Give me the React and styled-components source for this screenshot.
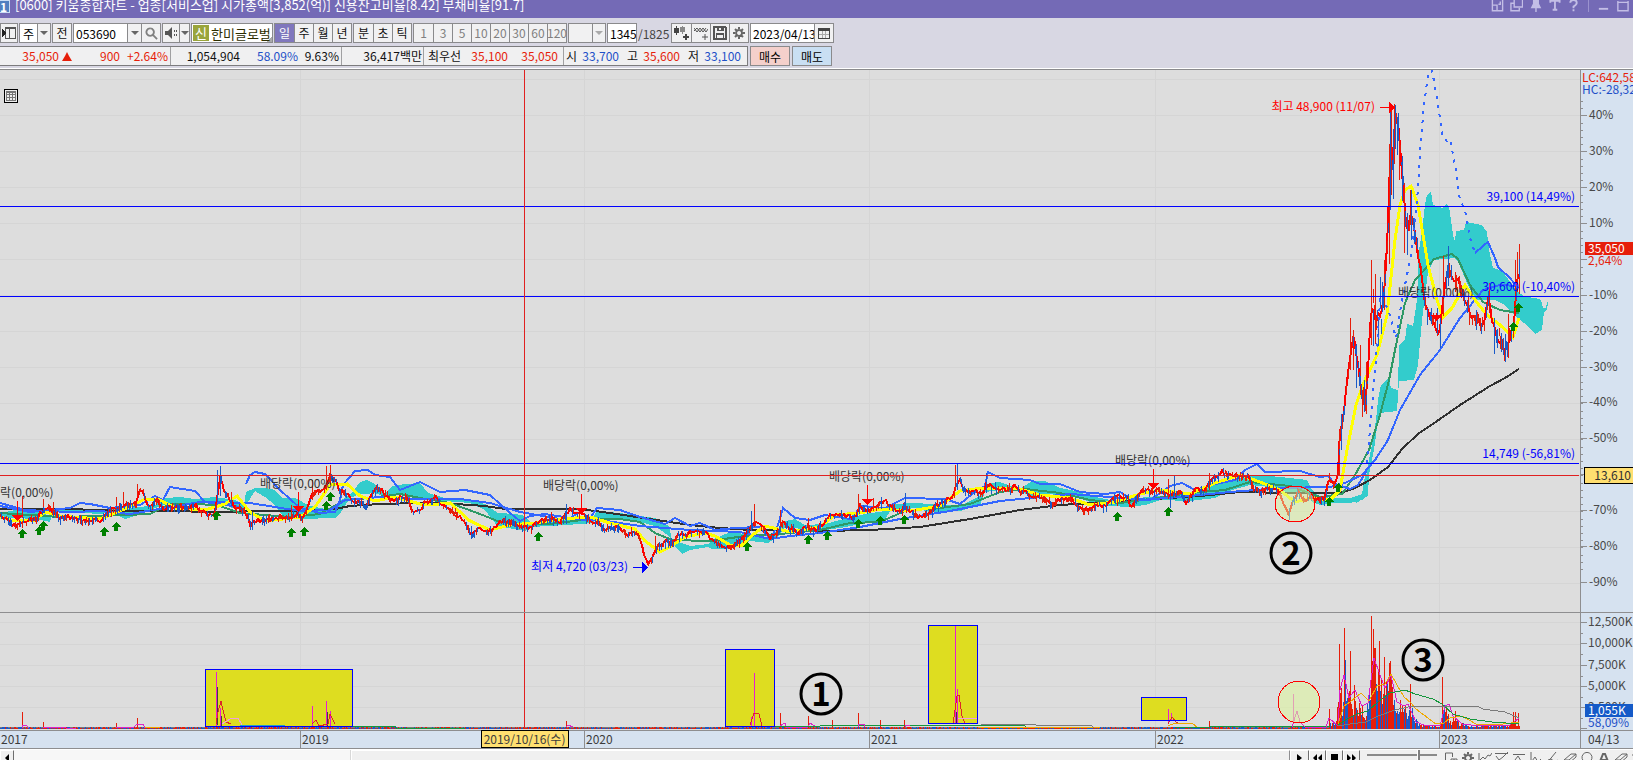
import React from "react";
import styled, { createGlobalStyle, css } from "styled-components";

const baseFont = `"Noto Sans CJK KR", "Liberation Sans", sans-serif`;

const GlobalStyle = createGlobalStyle`
  * {
    box-sizing: border-box;
  }
  body {
    margin: 0;
    overflow: hidden;
    font-family: ${baseFont};
    font-size: 12px;
  }
  button, input, select {
    font: inherit;
    color: inherit;
    margin: 0;
    padding: 0;
    border: 0;
    border-radius: 0;
    background: none;
  }
`;

const Container = styled.div`
  display: flex;
  flex-direction: column;
  width: 100%;
  height: 100vh;
  overflow: hidden;
  background: #d8d7e3;
  color: #000;
`;

/* title bar */
const TitleBar = styled.header`
  display: flex;
  justify-content: space-between;
  flex: 0 0 18px;
  overflow: hidden;
  background: #746ab6;
  color: #fff;
`;

const TitleLeft = styled.div`
  display: flex;
  gap: 5px;
  line-height: 12px;
  white-space: pre;
`;

const ScreenNo = styled.span`
  width: 10px;
  height: 13px;
  border: 1px solid #c8dcf4;
  border-left: 0;
  background: #4f7fc0;
  font-weight: 700;
  line-height: 11px;
`;

const Title = styled.h1`
  margin: 0;
  font-size: 13px;
  font-weight: 400;
  line-height: 10px;
`;

const TitleButtons = styled.div`
  display: flex;
  gap: 6px;
  padding-right: 4px;
  color: #c3bee6;
`;

const TitleButton = styled.button`
  display: flex;
  width: 13px;
  height: 13px;
`;

const TitleSplit = styled.span`
  width: 1px;
  height: 12px;
  margin: 0 2px;
  background: #9b93cf;
`;

/* toolbar */
const Toolbar = styled.div`
  display: flex;
  flex: 0 0 28px;
  align-items: center;
  gap: 1px;
  padding-bottom: 2px;
  padding-top: 4px;
`;

const Group = styled.div`
  display: flex;
  height: 20px;
  border: 1px solid #8a8a8c;
  background: ${props => (props.white ? "#fff" : "#f1f1f2")};

  & > * + * {
    border-left: 1px solid #8a8a8c;
  }
`;

const Cell = styled.button`
  display: flex;
  align-items: center;
  justify-content: center;
  width: ${props => props.w || 19}px;
  background: ${props => (props.active ? "#8077bd" : "#f1f1f2")};
  color: ${props => (props.active ? "#fff" : props.dim ? "#808080" : "#111")};
  line-height: 18px;
`;

const Field = styled.input`
  width: ${props => props.w}px;
  padding-left: 2px;
  background: #fff;
  white-space: nowrap;
`;

const PlainSelect = styled.select`
  width: ${props => props.w}px;
  padding-left: 3px;
  appearance: none;
  background: ${props => (props.disabled ? "#f1f1f2" : "#fff")};
`;

const NameBox = styled.div`
  display: flex;
  align-items: center;
  width: 82px;
  height: 20px;
  padding-left: 1px;
  gap: 2px;
  border: 1px solid #8a8a8c;
  background: linear-gradient(135deg, #fff 94%, #aaa 94%);
  color: #2d2d00;
  font-size: 13px;
  white-space: nowrap;
`;

const NameTag = styled.span`
  width: 16px;
  background: #9aa53c;
  color: #fff;
  line-height: 16px;
  text-align: center;
`;

const Total = styled.span`
  width: 32px;
  color: #444;
`;

/* quote line */
const QuoteRow = styled.div`
  display: flex;
  flex: 0 0 24px;
  gap: 2px;
  padding-bottom: 2px;
  border-bottom: 1px solid #8a8a8c;
  box-shadow: inset 0 -1px #fff;
`;

const QuoteBox = styled.div`
  display: flex;
  height: 20px;
  width: 748px;
  border: 1px solid #7c7c7e;
  border-left: 0;
  background: #f0f0f1;
`;

const QuoteCell = styled.div`
  display: grid;
  grid-template-columns: ${props => props.cols};
  align-items: center;
  border-right: 1px solid #a0a0a2;
  text-align: right;
  line-height: 18px;
  white-space: nowrap;

  &:last-child {
    border-right: 0;
  }
`;

const Num = styled.span`
  color: ${props => props.color || "#111"};
`;

const OrderButton = styled.button`
  width: 40px;
  height: 20px;
  border: 1px solid #8a8a8c;
  background: ${props => (props.buy ? "#f4d0cb" : "#c9dff3")};
`;

/* chart */
const ChartGrid = styled.main`
  display: grid;
  flex: 1 1 auto;
  min-height: 0;
  grid-template-columns: minmax(0, 1fr) 53px;
  grid-template-rows: minmax(0, 542fr) minmax(0, 118fr) 19px;
`;

const Pane = styled.section`
  position: relative;
  min-height: 0;
  overflow: hidden;
  background: ${props => (props.axis ? "#d6e2f0" : "#dddddd")};
  ${props =>
    props.axis &&
    css`
      border-left: 1px solid #8e8e90;
    `}
  ${props =>
    props.lower &&
    css`
      border-top: 1px solid #8e8e90;
    `}
`;

const Drawing = styled.svg`
  display: block;
  width: 100%;
  height: 100%;

  text {
    font-family: ${baseFont};
    font-size: 12px;
  }
`;

const BigDigit = styled.text`
  && {
    font-size: 33px;
    font-weight: 700;
  }
`;

const GridButton = styled.button`
  position: absolute;
  left: 4px;
  top: 19px;
  width: 14px;
  height: 14px;
`;

const TimeAxis = styled.div`
  position: relative;
  display: grid;
  grid-template-columns: 300fr 284fr 285fr 286fr 284fr 141fr;
  border: solid #8e8e90;
  border-width: 1px 0;
  background: #d6e2f0;
  color: #3c3c3c;
  line-height: 16px;
`;

const Year = styled.span`
  padding-left: 1px;

  & + & {
    border-left: 1px solid #8e8e90;
  }
`;

const DateTag = styled.span`
  position: absolute;
  left: 33.2%;
  top: -1px;
  width: 88px;
  height: 18px;
  border: 1px solid #000;
  background: #ffdf70;
  text-align: center;
  line-height: 15px;
  white-space: nowrap;
  transform: translateX(-50%);
`;

const AxisDate = styled.div`
  padding-left: 7px;
  border: solid #8e8e90;
  border-width: 1px 0 1px 1px;
  background: #d6e2f0;
  color: #3c3c3c;
  line-height: 16px;
`;

/* bottom bar */
const BottomBar = styled.footer`
  display: flex;
  flex: 0 0 11px;
  overflow: hidden;
  border-top: 1px solid #fff;
  background: #f0f0f0;
`;

const ScrollTrack = styled.div`
  display: flex;
  flex: 1 1 auto;
  height: 16px;
  background: #f7f7f7;
`;

const ScrollThumb = styled.div`
  flex: 1 1 auto;
  margin-left: 337px;
  border: 1px solid #fff;
  border-right-color: #8e8e90;
  background: #f0f0f0;
  box-shadow: -1px 0 #d8d8d8;
`;

const PlayButton = styled.button`
  display: flex;
  align-items: center;
  justify-content: center;
  width: ${props => props.w || 17}px;
  height: 14px;
  border: solid #fff;
  border-width: 1px 1px 0 1px;
  border-right-color: #6e6e6e;
  background: #f0f0f0;
`;

const Zoomer = styled.input`
  width: 70px;
  height: 9px;
  margin: 0 7px;
  appearance: none;
  background: linear-gradient(#8a8a8a, #8a8a8a) 0 4px / 100% 2px no-repeat;

  &::-webkit-slider-thumb {
    appearance: none;
    width: 3px;
    height: 12px;
    border-left: 1px solid #fff;
    background: #808080;
  }
`;

const Tools = styled.div`
  display: flex;
  gap: 3px;
  flex: 0 0 189px;
  overflow: hidden;
`;

const Tool = styled.button`
  display: flex;
  flex: 0 0 14px;
  height: 14px;
  padding-top: 1px;
`;

const RED = "#e61e0a";
const BLUE = "#1e50c8";

/* data: "x,y x,y ..." strings in chart units */
const parse = str => str.split(" ").map(p => p.split(",").map(Number));

const at = (pts, x) => {
  for (let i = 1; i < pts.length; i++) {
    if (x <= pts[i][0]) {
      const [x0, y0] = pts[i - 1];
      const [x1, y1] = pts[i];
      return y0 + ((y1 - y0) * (x - x0)) / (x1 - x0 || 1);
    }
  }
  return pts[pts.length - 1][1];
};

const randomizer = seed => () => {
  seed = (seed * 16807) % 2147483647;
  return seed / 2147483647;
};

const PRICE = parse(
  "0,517 5,519 10,523 17,525 22,521 30,520 38,517 42,511 50,509 55,512 60,517 70,517 80,519 85,520 95,519 100,521 104,516 110,511 118,508 124,505 130,506 136,502 139,490 144,492 146,503 150,506 157,500 163,509 170,506 178,507 188,508 195,505 200,510 208,514 214,516 217,500 219,480 221,478 224,490 230,500 236,508 243,510 247,515 250,525 255,522 262,520 270,520 280,517 290,517 298,514 303,518 308,506 313,492 318,490 323,490 327,487 330,476 335,480 340,490 346,493 352,500 360,502 366,506 371,497 376,488 382,490 390,500 397,500 402,496 408,500 413,512 420,510 425,503 430,501 436,497 440,503 447,509 455,514 462,519 466,525 471,534 475,530 480,530 487,533 493,529 502,520 508,522 515,524 525,527 530,529 537,522 545,520 552,519 560,522 567,512 571,508 576,514 584,515 590,520 598,523 605,529 612,526 620,528 628,534 635,532 640,538 644,553 648,563 651,560 655,550 660,545 665,542 672,542 680,534 690,533 705,532 712,540 722,546 732,547 742,540 748,530 755,524 760,525 765,530 770,538 777,533 783,522 790,528 798,533 806,527 815,530 823,524 832,514 842,515 855,517 860,507 870,511 877,504 885,500 892,508 900,512 905,505 912,513 920,517 930,513 936,505 945,501 952,498 956,485 960,478 963,488 968,493 975,492 983,493 986,483 992,487 1000,489 1010,489 1015,485 1020,490 1030,495 1040,497 1048,500 1052,507 1058,500 1070,499 1076,503 1082,511 1090,508 1097,504 1105,507 1112,500 1120,495 1128,499 1130,507 1135,500 1142,490 1150,491 1160,491 1170,496 1180,491 1186,503 1195,490 1205,490 1212,480 1222,472 1232,475 1240,477 1248,475 1253,488 1262,492 1268,488 1276,488 1280,496 1284,505 1289,515 1293,500 1298,491 1305,500 1310,495 1316,500 1325,498 1329,478 1334,485 1338,475 1340,430 1344,410 1348,375 1351,345 1353,335 1357,360 1361,388 1365,400 1368,375 1370,330 1373,300 1375,325 1378,312 1381,320 1384,290 1387,250 1389,190 1391,140 1393,180 1395,112 1399,130 1402,172 1404,200 1407,240 1410,215 1413,225 1416,240 1420,265 1423,290 1427,310 1433,322 1438,335 1440,328 1443,305 1445,280 1448,268 1451,275 1455,285 1460,282 1465,300 1470,315 1476,318 1483,325 1489,298 1492,320 1496,335 1502,342 1505,350 1509,340 1514,322 1516,290 1519,262"
);

// x, top, height
const RED_SPIKES = [
  [17, 501, 18], [22, 496, 22], [43, 499, 14], [53, 502, 10], [116, 497, 14], [123, 492, 14],
  [137, 484, 12], [231, 492, 14], [291, 505, 16], [298, 492, 20], [312, 480, 20], [326, 466, 24],
  [330, 465, 20], [551, 512, 10], [655, 536, 14], [754, 504, 22], [780, 510, 18], [808, 518, 12],
  [858, 494, 16], [873, 498, 12], [955, 465, 24], [1117, 496, 10], [1168, 479, 20], [1209, 473, 16],
  [1339, 431, 45], [1350, 318, 52], [1353, 330, 40], [1360, 345, 50], [1362, 390, 27], [1366, 362, 52],
  [1371, 260, 85], [1375, 274, 70], [1384, 260, 50], [1389, 144, 120], [1391, 105, 90], [1394, 104, 60],
  [1399, 135, 45], [1404, 183, 70], [1410, 190, 30], [1443, 256, 60], [1455, 272, 20], [1489, 283, 30],
  [1508, 314, 44], [1515, 260, 50], [1517, 252, 40], [1519, 244, 50]
];
const BLUE_SPIKES = [
  [217, 470, 32], [220, 466, 30], [252, 512, 18], [471, 526, 12], [566, 504, 20], [751, 511, 20],
  [881, 497, 12], [905, 493, 14], [957, 464, 26], [986, 473, 20], [1170, 490, 18], [1174, 476, 18],
  [1289, 508, 11], [1341, 414, 36], [1356, 344, 44], [1364, 380, 32], [1373, 310, 36], [1378, 320, 26],
  [1380, 277, 32], [1382, 282, 30], [1390, 110, 100], [1393, 129, 70], [1395, 109, 40], [1397, 117, 38],
  [1398, 113, 28], [1402, 156, 45], [1407, 213, 42], [1411, 190, 50], [1414, 218, 26], [1437, 308, 26],
  [1440, 318, 30], [1448, 246, 40], [1476, 310, 20], [1494, 318, 36], [1505, 334, 26]
];

const rects = list => list.map(([x, y, h]) => `M${x} ${y}h1v${h}h-1z`).join("");

const buildCandles = () => {
  const rnd = randomizer(77);
  const red = [];
  const blue = [];
  const line = [];
  for (let x = 0; x <= 1519; x++) {
    const wild = x > 1340 ? 9 : 4;
    const y = Math.round(at(PRICE, x) + (rnd() - 0.5) * wild);
    if (x % 2 === 0) line.push(`${x},${y}`);
    const up = Math.round(rnd() * wild);
    const down = Math.round(rnd() * wild);
    const roll = rnd();
    if (roll < 0.3) blue.push([x, y - up, up + down + 2]);
    else if (roll < 0.6) red.push([x, y - up, up + down + 1]);
  }
  return {
    line: line.join(" "),
    red: rects(red.concat(RED_SPIKES)),
    blue: rects(blue.concat(BLUE_SPIKES))
  };
};
const CANDLES = buildCandles();

const MA_BLACK =
  "0,509 70,509 120,511 165,511 218,512 260,511 300,511 335,509 350,506 380,504 420,503 455,504 485,506 505,509 540,509 580,509 610,513 650,519 690,525 720,528 750,530 820,531 870,530 920,527 970,519 1020,510 1060,505 1110,502 1155,499 1200,496 1240,492 1290,493 1340,493 1355,488 1370,480 1388,467 1402,449 1418,434 1440,419 1460,405 1490,386 1505,378 1519,369";
const MA_GREEN =
  "0,513 60,517 100,516 150,514 170,504 200,504 220,506 240,513 290,517 320,514 345,500 370,498 400,494 420,498 450,503 480,514 500,522 520,524 550,524 590,519 620,519 640,522 655,533 672,540 710,541 745,536 780,534 820,530 850,523 880,522 905,511 940,508 970,504 1000,492 1025,489 1060,493 1090,500 1120,503 1150,499 1190,493 1225,490 1250,482 1290,486 1320,497 1342,494 1355,475 1369,450 1380,415 1389,380 1395,350 1405,303 1415,280 1430,264 1434,259 1452,254 1458,259 1470,285 1483,302 1500,310 1519,313";
const MA_YELLOW =
  "0,517 15,521 35,520 45,512 60,516 100,519 120,511 135,504 145,499 160,500 175,508 205,510 225,504 237,496 250,512 265,521 300,517 315,507 330,485 347,484 360,496 375,501 395,497 420,504 430,505 450,503 470,521 490,530 510,525 535,523 560,519 590,517 610,523 635,529 645,541 660,552 670,547 685,537 705,533 715,536 730,545 742,545 755,533 765,526 790,532 820,527 835,515 860,513 880,509 910,511 940,506 960,491 975,489 1000,488 1020,489 1040,495 1070,498 1090,505 1115,502 1140,494 1160,490 1190,494 1215,483 1240,475 1260,482 1280,490 1295,502 1312,498 1330,500 1340,490 1347,450 1356,405 1364,382 1377,355 1387,315 1395,240 1400,205 1405,190 1411,186 1418,205 1428,265 1437,300 1443,317 1452,308 1465,285 1475,300 1486,314 1500,325 1513,337 1519,318";
const MA_BLUE =
  "0,503 25,510 70,512 100,511 130,514 165,508 200,502 250,503 300,511 330,510 345,500 380,497 420,499 460,499 490,503 520,512 560,519 600,520 640,526 690,530 740,532 770,539 790,536 820,533 860,527 900,519 950,511 1000,501 1040,497 1070,494 1110,497 1140,500 1180,497 1230,492 1280,488 1330,487 1345,483 1362,475 1375,460 1388,440 1400,410 1420,375 1440,350 1460,318 1483,290 1500,285 1518,286";
const SPAN_BLUE =
  "0,506 30,512 70,508 80,503 90,504 110,508 140,505 155,496 163,500 170,487 195,491 205,502 240,507";
const SPAN_BLUE_2 =
  "246,484 250,475 255,472 265,474 280,490 300,508 320,513 335,512 340,500 343,485 355,471 368,470 375,475 390,477 400,490 420,482 440,492 465,490 490,495 510,513 520,521 530,516 545,514 570,518 580,512 590,518 597,508 620,510 640,517 665,524 675,518 690,526 700,523 715,530 735,528 760,527 770,539 778,525 783,508 795,518 810,520 825,515 850,519 862,506 885,508 905,498 945,499 960,504 977,490 985,486 988,472 1000,478 1030,480 1040,484 1060,484 1080,492 1105,494 1120,492 1130,498 1150,500 1170,486 1182,483 1195,490 1215,484 1235,480 1245,470 1257,464 1265,472 1300,471 1320,477 1328,476 1335,484 1350,489 1358,485 1366,472";
const SPAN_DOTS =
  "1366,472 1370,430 1375,370 1378,335 1380,300 1388,308 1396,338 1402,300 1408,270 1412,250 1416,212 1418,188 1420,150 1424,105 1428,75 1432,70 1437,98 1443,138 1447,141 1450,139 1455,165 1460,200 1465,210 1470,238 1475,253";
const SPAN_TAIL = "1475,253 1483,246 1488,242 1495,258 1498,267 1510,278 1518,288";

// cloud band: x, top, bottom
const CLOUD =
  "0,513,517 15,510,518 35,511,519 50,516,522 52,511,513 75,509,511 95,511,514 112,509,513 125,508,519 140,507,514 155,505,508 165,498,505 180,497,505 195,499,502 215,497,501 235,500,509 244,505,510 246,492,505 255,488,491 265,488,497 275,490,505 282,498,515 295,498,519 310,506,519 325,509,518 335,508,518 341,500,512 350,495,498 360,482,494 367,480,494 373,483,493 385,493,496 393,486,496 405,484,494 420,483,498 428,493,499 445,498,501 470,500,503 485,504,510 498,513,527 515,514,529 525,516,531 530,522,527 550,521,526 580,519,524 592,519,523 597,511,520 620,513,518 640,516,522 655,518,526 669,526,536 672,540,543 682,543,554 690,546,550 708,544,547 712,540,549 730,532,549 738,533,546 750,535,541 768,538,543 778,530,537 785,521,527 795,519,528 805,525,530 825,524,530 840,520,528 865,514,523 885,511,520 890,504,511 915,503,508 930,504,512 960,506,511 980,496,505 985,484,492 1000,482,490 1020,489,491 1032,481,497 1045,481,494 1060,488,495 1075,491,497 1090,496,502 1110,500,506 1130,501,507 1145,497,505 1160,496,500 1190,494,501 1215,484,498 1232,480,490 1250,475,485 1270,476,487 1290,478,493 1307,480,492 1312,490,502 1320,497,505 1335,498,503 1350,498,503 1362,494,500 1366,470,496";
const cloudBand = () => {
  const rows = parse(CLOUD);
  const top = rows.map(r => `${r[0]},${r[1]}`);
  const bottom = rows.map(r => `${r[0]},${r[2]}`).reverse();
  return top.concat(bottom).join(" ");
};
const CLOUD_RISE =
  "1356,497 1364,494 1367,470 1372,445 1376,420 1378,400 1381,385 1389,378 1391,388 1398,390 1399,345 1405,340 1407,324 1413,326 1417,300 1419,250 1422,232 1425,205 1427,195 1431,192 1433,205 1443,208 1446,204 1449,206 1453,235 1455,241 1456,231 1464,230 1466,222 1482,225 1487,232 1489,250 1493,268 1500,270 1505,275 1517,291 1525,297 1536,298 1541,300 1543,308 1546,308 1547,302 1548,302 1547,310 1544,312 1542,330 1535,334 1527,325 1517,318 1505,305 1495,300 1475,300 1468,285 1458,262 1455,258 1434,260 1428,272 1422,320 1418,365 1414,380 1399,381 1397,411 1379,413 1374,450 1369,475 1368,496 1356,503";

const BUY_MARKS = parse(
  "22,529 39,526 43,521 104,527 116,522 216,511 291,528 304,527 326,501 330,492 538,532 747,542 808,535 827,531 858,519 880,516 904,515 1117,512 1168,507 1329,497 1338,483 1513,322 1518,303"
);
const SELL_MARKS = [
  [17, 501, 515], [298, 492, 506], [581, 494, 508], [867, 485, 499], [1153, 469, 483], [1436, 313, 315]
];
const DIVIDENDS = parse("-22,497 260,488 543,490 829,481 1115,465 1398,297");
const YEAR_X = [300, 584, 869, 1155, 1439];
const LEVELS = [
  [206, "39,100 (14,49%)"],
  [296, "30,600 (-10,40%)"],
  [463, "14,749 (-56,81%)"]
];
const PERCENTS = [40, 30, 20, 10, null, -10, -20, -30, -40, -50, null, -70, -80, -90];

/* volume */
const VOL_TOP = parse(
  "1330,722 1336,720 1338,690 1340,650 1342,700 1344,632 1347,690 1350,655 1352,705 1354,680 1358,704 1361,695 1366,710 1368,690 1371,665 1373,618 1375,640 1378,655 1381,675 1384,660 1386,672 1389,668 1391,665 1394,685 1397,699 1400,695 1403,700 1406,704 1410,700 1415,716 1420,723 1430,724 1438,725 1441,722 1442,700 1446,704 1450,720 1453,716 1460,722 1470,725 1488,724 1508,725 1512,720 1519,722"
);
const VOL_SPIKES = [
  [22, 712], [43, 722], [116, 723], [137, 718], [566, 721], [780, 713], [808, 716], [858, 713], [880, 720],
  [904, 720], [832, 720], [1209, 721], [1329, 709], [1339, 644], [1344, 628], [1350, 651], [1371, 616],
  [1373, 637], [1375, 648], [1379, 641], [1384, 657], [1389, 663], [1390, 661], [1410, 684],
  [1442, 677], [1455, 711], [1513, 712], [1515, 712], [1518, 713]
];
const buildVolume = () => {
  const rnd = randomizer(4242);
  const red = [];
  const blue = [];
  for (let x = 0; x <= 1519; x++) {
    let h = 1 + Math.round(rnd());
    if (x > 1329) {
      h = Math.round((729 - at(VOL_TOP, x)) * (0.35 + rnd() * 0.6));
    }
    const bar = [x, 729 - h, h];
    if (rnd() < 0.52) red.push(bar);
    else blue.push(bar);
  }
  VOL_SPIKES.forEach(([x, y]) => red.push([x, y, 729 - y]));
  return { red: rects(red), blue: rects(blue) };
};
const VOLUME = buildVolume();

const BOXES = [
  [205, 669, 147, 57],
  [725, 649, 49, 77],
  [928, 625, 49, 98],
  [1141, 697, 45, 23]
];
const MAGENTA_BARS = rects([
  [216, 672, 54], [220, 708, 18], [312, 706, 20], [326, 701, 25], [330, 711, 15], [754, 673, 53],
  [751, 717, 10], [955, 626, 97], [957, 689, 35], [1168, 709, 15], [1171, 713, 8], [1293, 694, 30]
]);

const Polyline = ({ pts, color, width = 2, ...rest }) => (
  <polyline points={pts} fill="none" stroke={color} strokeWidth={width} {...rest} />
);

const CircledDigit = ({ x, y, digit }) => (
  <g shapeRendering="auto">
    <circle cx={x} cy={y} r="20" fill="none" stroke="#000" strokeWidth="3" />
    <BigDigit x={x} y={y + 12} textAnchor="middle">
      {digit}
    </BigDigit>
  </g>
);

const PriceChart = () => (
  <Drawing viewBox="0 70 1580 542" preserveAspectRatio="xMaxYMin slice" shapeRendering="crispEdges">
    {PERCENTS.concat(0).map((p, i) => (
      <rect key={i} x="0" y={79 + i * 36} width="1580" height="1" fill="#d5d5d5" />
    ))}
    {YEAR_X.map(x => (
      <rect key={x} x={x} y="70" width="1" height="542" fill="#d5d5d5" />
    ))}
    <polygon points={cloudBand()} fill="#33cccc" />
    <polygon points={CLOUD_RISE} fill="#33cccc" />
    <Polyline pts={MA_BLACK} color="#303030" />
    <Polyline pts={MA_GREEN} color="#2e9966" />
    <Polyline pts={MA_BLUE} color="#3366ff" />
    <Polyline pts={SPAN_BLUE} color="#3366ff" />
    <Polyline pts={SPAN_BLUE_2} color="#3366ff" />
    <Polyline pts={MA_YELLOW} color="#ffff00" width={3} />
    <Polyline pts={CANDLES.line} color="#ff0000" />
    <path d={CANDLES.red} fill={RED} />
    <path d={CANDLES.blue} fill="#1a5ac8" />
    <Polyline pts={SPAN_DOTS} color="#3366ff" strokeDasharray="3 6" />
    <Polyline pts={SPAN_TAIL} color="#3366ff" />
    <ellipse cx="1295" cy="504" rx="20" ry="18" fill="#ddf5a0" fillOpacity="0.5" stroke="#f00" />

    {BUY_MARKS.map(([x, y]) => (
      <path key={`${x}-${y}`} d={`M${x} ${y}l5 5h-3v4h-4v-4h-3z`} fill="#008000" />
    ))}
    {SELL_MARKS.map(([x, from, to]) => (
      <path key={x} d={`M${x} ${from}h1v${to - from}h5l-5 6h-1l-5 -6h5z`} fill="#f00" />
    ))}
    {DIVIDENDS.map(([x, y]) => (
      <text key={x} x={x} y={y} fill="#333">
        배당락(0,00%)
      </text>
    ))}

    {LEVELS.map(([y, label]) => (
      <g key={y} fill="#00f">
        <rect x="0" y={y} width="1579" height="1" />
        <text x="1575" y={y - 5} textAnchor="end">
          {label}
        </text>
      </g>
    ))}
    <rect x="0" y="475" width="1579" height="1" fill="#e02020" />
    <rect x="524" y="70" width="1" height="542" fill="#e02020" />

    <g fill="#f00">
      <text x="1375" y="111" textAnchor="end">
        최고 48,900 (11/07)
      </text>
      <path d="M1380 107h9v-5l6 5l-6 6v-5h-9z" />
    </g>
    <g fill="#00f">
      <text x="628" y="571" textAnchor="end">
        최저 4,720 (03/23)
      </text>
      <path d="M633 567h9v-5l6 5l-6 6v-5h-9z" />
    </g>
    <CircledDigit x={1291} y={553} digit="2" />
  </Drawing>
);

const VolumeChart = () => (
  <Drawing viewBox="0 613 1580 117" preserveAspectRatio="xMaxYMin slice" shapeRendering="crispEdges">
    {[622, 644, 665, 686, 707].map(y => (
      <rect key={y} x="0" y={y} width="1580" height="1" fill="#d5d5d5" />
    ))}
    {YEAR_X.map(x => (
      <rect key={x} x={x} y="613" width="1" height="117" fill="#d5d5d5" />
    ))}
    <rect x="0" y="727" width="1330" height="1" fill="#7a7a7a" />
    {BOXES.map(([x, y, w, h]) => (
      <rect key={x} x={x} y={y} width={w + 1} height={h + 1} fill="#dedd20" />
    ))}
    <path d={VOLUME.blue} fill="#1a5ac8" />
    <path d={VOLUME.red} fill={RED} />
    <path d={MAGENTA_BARS} fill="#e61ed2" />
    <path d="M217 687h1v38h-1zM221 716h1v10h-1zM327 712h1v14h-1zM956 712h1v12h-1z" fill="#404040" />

    <Polyline pts="216,724 218,712 221,701 223,710 226,722 231,724" color="#dc2828" width={1} />
    <Polyline pts="222,724 230,719 238,718 242,725" color="#f0a0dc" width={1} />
    <Polyline pts="312,724 316,720 319,726 328,724 330,714 335,724" color="#dc2828" width={1} />
    <Polyline pts="750,725 754,713 759,714 761,722 762,726" color="#dc2828" width={1} />
    <Polyline pts="953,724 957,696 959,695 962,716 965,724" color="#dc2828" width={1} />
    <Polyline pts="958,718 977,718" color="#f0a0dc" width={1} />
    <Polyline pts="1168,724 1172,717 1176,722 1180,724" color="#dc2828" width={1} />
    <Polyline pts="240,725 285,725" color="#1ea0c8" width={1} />
    {BOXES.map(([x, y, w, h]) => (
      <path key={x} d={`M${x} ${y}h${w + 1}v${h + 1}h-${w + 1}zm1 1v${h - 1}h${w - 1}v-${h - 1}z`} fill="#00f" />
    ))}

    <Polyline pts="22,728 22,725 26,725 29,728" color="#dc28c8" width={1} />
    <Polyline pts="43,727 55,727 76,729" color="#dc28c8" width={1} />
    <Polyline pts="116,727 134,727 137,724 143,724 145,728" color="#dc28c8" width={1} />
    <Polyline pts="145,727 160,727" color="#f0a800" width={1} />
    <Polyline pts="353,726 395,726 396,728 465,728" color="#14963c" width={1} />
    <Polyline pts="566,727 568,725 573,727" color="#dc28c8" width={1} />
    <Polyline pts="775,727 780,726 785,723 786,727 808,727 810,723 816,727" color="#dc28c8" width={1} />
    <Polyline pts="775,726 820,726 980,725 1024,725 1026,727 1090,727" color="#14963c" width={1} />
    <Polyline pts="858,727 859,724 864,724 865,727" color="#dc28c8" width={1} />
    <Polyline pts="905,727 905,725 910,725" color="#dc28c8" width={1} />
    <Polyline pts="978,727 1020,727 1100,728 1140,728" color="#f0a800" width={1} />
    <Polyline pts="980,724 1092,726 1094,728" color="#7a7a7a" width={1} />
    <Polyline pts="1168,726 1175,723 1193,724 1197,727" color="#f0a800" width={1} />
    <Polyline pts="1175,727 1210,727 1330,726" color="#14963c" width={1} />

    <Polyline
      pts="1292,727 1297,711 1300,722 1305,727 1326,727 1329,718 1338,726 1340,690 1344,675 1349,698 1355,690 1362,706 1368,703 1374,658 1380,675 1385,688 1391,675 1397,702 1404,706 1408,704 1416,722 1424,725 1440,726 1445,706 1449,704 1453,716 1462,724 1480,726 1510,725 1519,718"
      color="#dc1ec8"
      width={1}
    />
    <Polyline
      pts="1338,724 1344,706 1350,702 1361,693 1369,701 1377,686 1385,684 1391,674 1397,685 1404,697 1411,703 1416,709 1424,715 1436,724 1444,723 1450,718 1462,716 1476,724 1495,725 1519,722"
      color="#f0a800"
      width={1}
    />
    <Polyline
      pts="1338,725 1347,719 1357,714 1368,711 1378,702 1390,693 1405,690 1415,694 1433,699 1442,704 1453,714 1470,719 1492,722 1519,724"
      color="#14963c"
      width={1}
    />
    <Polyline
      pts="1338,726 1350,724 1366,722 1378,716 1395,710 1408,707 1440,706 1477,706 1483,709 1505,712 1519,718"
      color="#7a7a7a"
      width={1}
    />
    <circle cx="1299" cy="702" r="21" fill="#ddf5a0" fillOpacity="0.6" stroke="#f00" />
    <rect x="524" y="613" width="1" height="115" fill="#e02020" />
    <CircledDigit x={821} y={694} digit="1" />
    <CircledDigit x={1423} y={660} digit="3" />
  </Drawing>
);

const PriceAxis = () => (
  <Drawing viewBox="1581 70 52 542" preserveAspectRatio="xMinYMin slice" shapeRendering="crispEdges">
    {Array.from({ length: 66 }, (_, i) => (
      <rect key={i} x="1581" y={101 + Math.round(i * 7.2)} width="2" height="1" fill="#8e8e90" />
    ))}
    {PERCENTS.map((p, i) => (
      <g key={i} fill="#484848">
        <rect x="1581" y={115 + i * 36 - (i > 7 ? 1 : 0)} width="6" height="1" fill="#8e8e90" />
        {p !== null && (
          <text x="1589" y={119 + i * 36 - (i > 7 ? 1 : 0)}>
            {p}%
          </text>
        )}
      </g>
    ))}
    <text x="1582" y="82" fill={RED}>
      LC:642,58
    </text>
    <text x="1582" y="94" fill={BLUE}>
      HC:-28,32
    </text>
    <rect x="1585" y="242" width="48" height="13" fill={RED} />
    <text x="1588" y="253" fill="#fff">
      35,050
    </text>
    <text x="1588" y="265" fill={RED}>
      2,64%
    </text>
    <rect x="1584" y="467" width="60" height="17" fill="#000" />
    <rect x="1585" y="468" width="60" height="15" fill="#ffdf70" />
    <text x="1631" y="480" textAnchor="end" fill="#303030">
      13,610
    </text>
  </Drawing>
);

const VolumeAxis = () => (
  <Drawing viewBox="1581 613 52 117" preserveAspectRatio="xMinYMin slice" shapeRendering="crispEdges">
    {["12,500K", "10,000K", "7,500K", "5,000K", "2,500K"].map((label, i) => (
      <g key={label} fill="#484848">
        <rect x="1581" y={622 + Math.round(i * 21.3)} width="6" height="1" fill="#8e8e90" />
        <rect x="1581" y={633 + Math.round(i * 21.3)} width="2" height="1" fill="#8e8e90" />
        <text x="1588" y={626 + Math.round(i * 21.3)}>
          {label}
        </text>
      </g>
    ))}
    <rect x="1581" y="728" width="6" height="1" fill="#8e8e90" />
    <rect x="1585" y="704" width="48" height="13" fill="#145ac8" />
    <text x="1588" y="715" fill="#fff">
      1,055K
    </text>
    <text x="1588" y="727" fill={BLUE}>
      58,09%
    </text>
  </Drawing>
);

/* icons, all stroked with the current colour */
const Icon = ({ d, size = 14, fill = "none", color = "currentColor", w = 1 }) => (
  <svg width={size} height={size} viewBox="0 0 14 14" fill={fill} stroke={color} strokeWidth={w}>
    <path d={d} />
  </svg>
);

const Arrow = ({ color = "#666" }) => (
  <svg width="8" height="4" viewBox="0 0 8 4">
    <path d="M0 0h8L4 4z" fill={color} />
  </svg>
);

const ICONS = {
  search: "M5.5 1.5a4 4 0 1 0 .1 0M8.5 8.5l4.500 4.500",
  wave: "M0 5l3 -3l3 4l3 -4l3 4l2 -3M0 2l3 4l3 -4l3 4l3 -4M11 8v6M8 11h6",
  gear: "M7 4a3 3 0 1 0 .1 0M7 1v2M7 11v2M1 7h2M11 7h2M3 3l1.500 1.500M9.500 9.500l1.500 1.500M11 3l-1.500 1.500M4.500 9.500l-1.500 1.500"
};

const TITLE_ICONS = [
  ["layout", "M1.500 0v11.500h11v-11.500M1.500 5.500h5v6M8 4.500h2v-3"],
  ["windows", "M4.500 0v7.500h9v-7.500M4 3.500h-3v8h9v-3"],
  ["pin", "M5 0h5v4l2 4h-9l2 -4zM7.500 8v5"],
  ["font", "M2 1h11M7.500 0v11M5 10.500h5M2.500 0v3M12.500 0v3"],
  ["help", "M3.500 3q0 -3 3.500 -3t3.500 3q0 2 -3.500 4v2M7 10v2"]
];

const TOOL_ICONS = [
  ["new", "M10 12h-8.500v-10h7v4M7 8h6v6h-6zM10 8v6"],
  ["settings", ICONS.gear],
  ["line", "M1 2v11M2 9l3 -3l2 2l3 -4l2 1l2 -3M2 12l4 -2"],
  ["pattern", "M0 2.500h13M1 5l3 4l4 -3l5 -5M1 12h12"],
  ["levels", "M1 3.500h12M3 9l3 -4l3 5h4"],
  ["zigzag", "M2 1v13M3 10l3 -4l3 5l3 -3"],
  ["trend", "M1 12l9 -11M2 9l3 -1l4 3l3 -2"],
  ["eraser", "M1 9l7 -6h5v3l-7 6h-5zM1 9h5l7 -6M6 9v3"],
  ["shape", "M2 13h3v-2a5 5 0 1 1 4 0v2h3"],
  ["text", "M2 13l4 -10h2l4 10M4 9h6"],
  ["erase all", "M1 9l7 -6h5v3l-7 6h-5zM1 9h5l7 -6M6 9v3"],
  ["more", "M1 4h12M5 4v8"]
];

const MINUTES = ["1", "3", "5", "10", "20", "30", "60", "120"];

const App = () => (
  <Container>
    <GlobalStyle />
    <TitleBar>
      <TitleLeft>
        <ScreenNo>1</ScreenNo>
        <Title>[0600] 키움종합차트 - 업종[서비스업] 시가총액[3,852(억)] 신용잔고비율[8.42] 부채비율[91.7]</Title>
      </TitleLeft>
      <TitleButtons>
        {TITLE_ICONS.map(([name, d]) => (
          <TitleButton key={name} aria-label={name}>
            <Icon d={d} size={13} w={name === "help" || name === "font" ? 2 : 1.5} fill={name === "pin" ? "currentColor" : "none"} />
          </TitleButton>
        ))}
        <TitleSplit />
        <TitleButton aria-label="minimize">
          <Icon d="M2 9.500h10" size={13} w={2} />
        </TitleButton>
        <TitleButton aria-label="maximize">
          <Icon d="M2 2.500h11M2 1v10.500h11v-10.500" size={13} w={1.5} />
        </TitleButton>
      </TitleButtons>
    </TitleBar>

    <Toolbar>
      <Group>
        <Cell w={16} aria-label="panel">
          <svg width="14" height="14" viewBox="0 0 14 14" shapeRendering="crispEdges" fill="#555">
            <path d="M3 1h11v12h-11zM4 3v9h3v-9zM8 3v9h5v-9z" fillRule="evenodd" />
            <path d="M0 3l5 4l-5 4z" fill="#222" />
          </svg>
        </Cell>
      </Group>
      <Group white>
        <PlainSelect w={17} aria-label="종목 구분">
          <option>주</option>
        </PlainSelect>
        <Cell w={13} aria-label="구분 열기">
          <Arrow />
        </Cell>
      </Group>
      <Group>
        <Cell w={18}>전</Cell>
      </Group>
      <Group white>
        <Field w={53} defaultValue="053690" aria-label="종목코드" />
        <Cell w={14} aria-label="코드 목록">
          <Arrow />
        </Cell>
        <Cell w={19} aria-label="검색">
          <Icon d={ICONS.search} color="#808080" w={2} size={13} />
        </Cell>
      </Group>
      <Group>
        <Cell w={16} aria-label="소리">
          <svg width="13" height="12" viewBox="0 0 13 12" fill="#555">
            <path d="M0 4h3l4-4v12l-4-4h-3zM9 3h1v2h-1zM9 7h1v2h-1zM11 3h1v2h-1zM11 7h1v2h-1z" />
          </svg>
        </Cell>
        <Cell w={10} aria-label="소리 설정">
          <Arrow />
        </Cell>
      </Group>
      <NameBox>
        <NameTag>신</NameTag>
        한미글로벌
      </NameBox>
      <Group>
        {["일", "주", "월", "년"].map(name => (
          <Cell key={name} active={name === "일" ? 1 : undefined}>
            {name}
          </Cell>
        ))}
      </Group>
      <Group>
        {["분", "초", "틱"].map(name => (
          <Cell key={name}>{name}</Cell>
        ))}
      </Group>
      <Group>
        {MINUTES.map(name => (
          <Cell key={name} dim={1}>
            {name}
          </Cell>
        ))}
      </Group>
      <Group>
        <PlainSelect w={23} disabled aria-label="분 선택" />
        <Cell w={13} aria-label="분 목록">
          <Arrow color="#aaa" />
        </Cell>
      </Group>
      <Group white>
        <Field w={28} defaultValue="1345" aria-label="조회 개수" />
      </Group>
      <Total>/1825</Total>
      <Group>
        <Cell aria-label="차트 추가">
          <svg width="15" height="14" viewBox="0 0 15 14" shapeRendering="crispEdges" fill="#444">
            <path d="M2 0h1v2h2v5h-2v2h-1v-2h-2v-5h2zM11 8h2v2h2v2h-2v2h-2v-2h-2v-2h2z" />
            <path d="M8 0h1v1h2v5h-2v2h-1v-2h-2v-5h2z" fill="#888" />
          </svg>
        </Cell>
        <Cell aria-label="지표 추가">
          <Icon d={ICONS.wave} color="#555" />
        </Cell>
        <Cell aria-label="저장">
          <svg width="14" height="14" viewBox="0 0 14 14" shapeRendering="crispEdges" fill="#555">
            <path d="M0 0h12l2 2v12h-14zM2 2v10h1v-5h8v5h1v-9l-1 -1v3h-7v-3zM6 2v2h2v-2zM4 9v3h6v-3z" fillRule="evenodd" />
          </svg>
        </Cell>
        <Cell aria-label="설정">
          <Icon d={ICONS.gear} color="#666" w={2} />
        </Cell>
      </Group>
      <Group white>
        <Field w={63} defaultValue="2023/04/13" aria-label="날짜" />
        <Cell aria-label="달력">
          <svg width="12" height="11" viewBox="0 0 12 11" shapeRendering="crispEdges" fill="#444">
            <path d="M0 0h12v11h-12zM1 3v7h10v-7z" fillRule="evenodd" />
            <path d="M4 3h1v7h-1zM7 3h1v7h-1zM1 6h10v1h-10z" fill="#aaa" />
          </svg>
        </Cell>
      </Group>
    </Toolbar>

    <QuoteRow>
      <QuoteBox>
        <QuoteCell cols="59px 13px 48px 48px 2px">
          <Num color={RED}>35,050</Num>
          <Num color={RED}>
            <svg width="10" height="9" viewBox="0 0 10 9">
              <path d="M5 0l2 4l3 5h-10l3-5z" fill={RED} />
            </svg>
          </Num>
          <Num color={RED}>900</Num>
          <Num color={RED}>+2.64%</Num>
        </QuoteCell>
        <QuoteCell cols="69px 58px 41px 2px">
          <Num>1,054,904</Num>
          <Num color={BLUE}>58.09%</Num>
          <Num>9.63%</Num>
        </QuoteCell>
        <QuoteCell cols="80px 1px">
          <Num>36,417백만</Num>
        </QuoteCell>
        <QuoteCell cols="37px 47px 50px 5px">
          <Num>최우선</Num>
          <Num color={RED}>35,100</Num>
          <Num color={RED}>35,050</Num>
        </QuoteCell>
        <QuoteCell cols="13px 42px 19px 42px 19px 42px">
          <Num>시</Num>
          <Num color={BLUE}>33,700</Num>
          <Num>고</Num>
          <Num color={RED}>35,600</Num>
          <Num>저</Num>
          <Num color={BLUE}>33,100</Num>
        </QuoteCell>
      </QuoteBox>
      <OrderButton buy={1}>매수</OrderButton>
      <OrderButton>매도</OrderButton>
    </QuoteRow>

    <ChartGrid>
      <Pane>
        <PriceChart />
        <GridButton aria-label="데이터 표">
          <svg width="14" height="14" viewBox="0 0 14 14" shapeRendering="crispEdges">
            <path d="M0 0h14v14h-14z" />
            <path d="M1 1h12v12h-12z" fill="#eee" />
            <path d="M2 2h10v10h-10z" fill="#777" />
            <path d="M3 4h2v1h-2zM6 4h2v1h-2zM9 4h2v1h-2zM3 6h2v2h-2zM6 6h2v2h-2zM9 6h2v2h-2zM3 9h2v2h-2zM6 9h2v2h-2zM9 9h2v2h-2z" fill="#eee" />
          </svg>
        </GridButton>
      </Pane>
      <Pane axis={1}>
        <PriceAxis />
      </Pane>
      <Pane lower={1}>
        <VolumeChart />
      </Pane>
      <Pane axis={1} lower={1}>
        <VolumeAxis />
      </Pane>
      <TimeAxis>
        {[2017, 2019, 2020, 2021, 2022, 2023].map(year => (
          <Year key={year}>{year}</Year>
        ))}
        <DateTag>2019/10/16(수)</DateTag>
      </TimeAxis>
      <AxisDate>04/13</AxisDate>
    </ChartGrid>

    <BottomBar>
      <ScrollTrack>
        <PlayButton w={14} aria-label="왼쪽으로">
          <svg width="4" height="8" viewBox="0 0 4 8">
            <path d="M4 0v8l-4-4z" />
          </svg>
        </PlayButton>
        <ScrollThumb />
      </ScrollTrack>
      <PlayButton w={19} aria-label="재생">
        <svg width="5" height="8" viewBox="0 0 5 8">
          <path d="M0 0v8l5-4z" />
        </svg>
      </PlayButton>
      <PlayButton aria-label="뒤로">
        <svg width="9" height="8" viewBox="0 0 9 8">
          <path d="M4 0v8l-4-4zM9 0v8l-4-4z" />
        </svg>
      </PlayButton>
      <PlayButton aria-label="정지">
        <svg width="7" height="8" viewBox="0 0 7 8">
          <path d="M0 0h7v8h-7z" />
        </svg>
      </PlayButton>
      <PlayButton aria-label="앞으로">
        <svg width="9" height="8" viewBox="0 0 9 8">
          <path d="M0 0v8l4-4zM5 0v8l4-4z" />
        </svg>
      </PlayButton>
      <Zoomer type="range" defaultValue="75" aria-label="확대" />
      <Tools>
        {TOOL_ICONS.map(([name, d]) => (
          <Tool key={name} aria-label={name}>
            <Icon d={d} color="#666" size={14} w={name === "text" || name === "settings" ? 2 : 1} />
          </Tool>
        ))}
      </Tools>
    </BottomBar>
  </Container>
);

export default App;
